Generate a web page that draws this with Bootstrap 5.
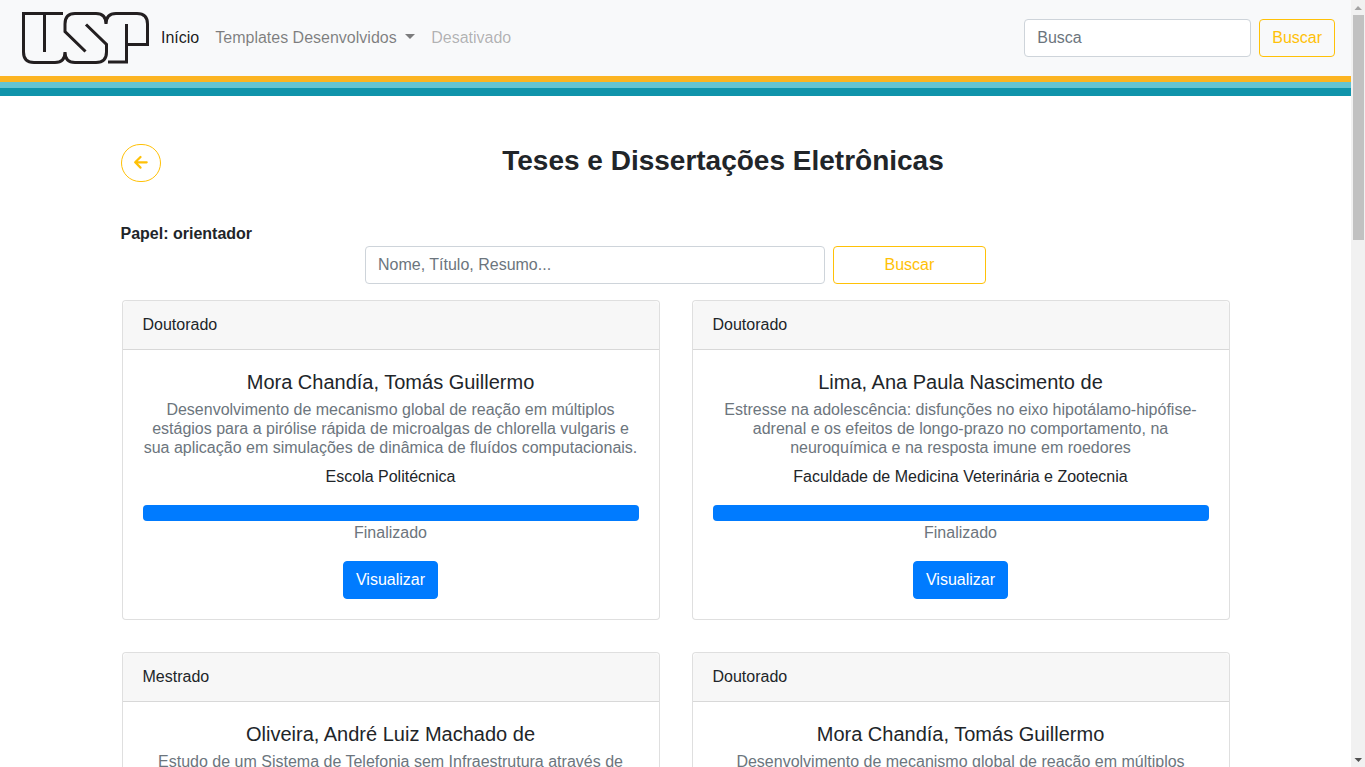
<!DOCTYPE html>
<html lang="pt-br">
<head>
<meta charset="utf-8">
<meta name="viewport" content="width=device-width, initial-scale=1">
<title>Teses e Dissertações Eletrônicas</title>
<link rel="stylesheet" href="https://cdn.jsdelivr.net/npm/bootstrap@5.3.0/dist/css/bootstrap.min.css">
<style>
  body { font-family: "Liberation Sans", Arial, sans-serif; color: #212529; background: #fff; }
  .page-view { min-width: 0; overflow-y: auto; scrollbar-width: none; }
  .page-view::-webkit-scrollbar { display: none; }

  .site-nav { background: #f8f9fa; --bs-navbar-color: rgba(0,0,0,.5); --bs-navbar-active-color: rgba(0,0,0,.9); --bs-navbar-disabled-color: rgba(0,0,0,.3); }
  .site-nav .dropdown-toggle::after { border-width: 5px 5px 0; }
  .usp-logo { fill: none; stroke: #231f20; stroke-width: 3; }
  .stripe-gold { height: 6px; background: #fcb421; }
  .stripe-sky { height: 6px; background: #64c4d2; }
  .stripe-teal { height: 8px; background: #1094ab; }

  .form-control { border-color: #ced4da; border-radius: 4px; }
  .form-control::placeholder { color: #6c757d; }
  .btn { border-radius: 4px; }
  .btn-outline-warning { --bs-btn-color: #ffc107; --bs-btn-border-color: #ffc107; }
  .btn-primary { --bs-btn-bg: #007bff; --bs-btn-border-color: #007bff; }
  .nav-search { width: 227px; }

  .container, .row-wide { --bs-gutter-x: 30px; }
  .btn-back { width: 40px; height: 38px; border-radius: 20px; }
  .page-head { margin-bottom: 40px; }
  .page-title { font-size: 28px; font-weight: 700; }
  .thesis-search { display: grid; grid-template-columns: 3fr 1fr; gap: 8px; max-width: 621px; }

  .thesis-card { border-color: rgba(0,0,0,.125); border-radius: 4px; --bs-card-cap-bg: rgba(0,0,0,.03); --bs-card-border-color: rgba(0,0,0,.125); }
  .thesis-card .card-header { padding: 12px 20px; }
  .thesis-card .card-body { padding: 20px; text-align: center; }
  .thesis-card .card-title { font-size: 20px; font-weight: 400; margin-bottom: 6px; }
  .thesis-card .card-subtitle { font-size: 16px; line-height: 19px; font-weight: 400; margin: 0 0 8px; color: #6c757d; }
  .thesis-card .progress { height: 16px; border-radius: 4px; }
  .thesis-card .progress-bar { background: #007bff; }
  .status-text { color: #6c757d; }

  .scroll-rail { width: 14px; background: #f1f1f1; }
  .scroll-thumb { height: 225px; margin: 0 1px 0 2px; background: #c1c1c1; }
</style>
</head>
<body>
<div class="d-flex vh-100">
  <div class="page-view flex-fill">
    <header>
      <nav class="site-nav navbar navbar-expand-lg px-3 py-2">
        <a class="navbar-brand p-0 m-0" href="#" aria-label="USP">
          <svg class="usp-logo d-block" width="137" height="60" viewBox="16 8 137 60">
            <path d="M63 13.500H23.500V52Q23.500 62.500 34 62.500H55Q65 62.500 65 52Q65 62.500 75 62.500H96Q106.500 62.500 106.500 52V44.500L86 24.500"/>
            <path d="M44.500 13.500V52"/>
            <path d="M85.500 51.500L65 31.500V24Q65 13.500 75 13.500H96Q106 13.500 106 24Q106 13.500 116 13.500H137Q147.500 13.500 147.500 24V44.500H127"/>
            <path d="M126.500 24V62H108"/>
          </svg>
        </a>
        <button class="navbar-toggler" type="button" data-bs-toggle="collapse" data-bs-target="#menu" aria-label="Menu"><span class="navbar-toggler-icon"></span></button>
        <div class="collapse navbar-collapse" id="menu">
          <ul class="navbar-nav me-auto">
            <li class="nav-item"><a class="nav-link active" href="#">Início</a></li>
            <li class="nav-item dropdown"><a class="nav-link dropdown-toggle" href="#" role="button">Templates Desenvolvidos </a></li>
            <li class="nav-item"><a class="nav-link disabled" href="#" aria-disabled="true">Desativado</a></li>
          </ul>
          <form class="d-flex gap-2">
            <input class="form-control nav-search" type="search" placeholder="Busca" aria-label="Busca">
            <button class="btn btn-outline-warning" type="submit">Buscar</button>
          </form>
        </div>
      </nav>
      <div class="stripe-gold"></div>
      <div class="stripe-sky"></div>
      <div class="stripe-teal"></div>
    </header>

    <main class="container mt-5">
      <div class="row row-wide page-head">
        <div class="col-2 col-lg-1">
          <a class="btn btn-outline-warning btn-back d-flex align-items-center justify-content-center p-0" href="#" aria-label="Voltar">
            <svg width="14" height="16" viewBox="0 0 14 16" fill="none" stroke="currentColor" stroke-width="2.2" stroke-linecap="round" stroke-linejoin="round"><path d="M6.500 2L1.200 7.300L6.500 12.600M1.500 7.300H12.700"/></svg>
          </a>
        </div>
        <div class="col-10 col-lg-11"><h1 class="page-title text-center mb-0">Teses e Dissertações Eletrônicas</h1></div>
      </div>

      <div class="fw-bold">Papel: orientador</div>
      <form class="thesis-search mx-auto">
        <input class="form-control" type="text" placeholder="Nome, Título, Resumo..." aria-label="Nome, Título, Resumo">
        <button class="btn btn-outline-warning" type="submit">Buscar</button>
      </form>

      <div class="row row-wide">
        <div class="col-12 col-md-6 p-3">
          <article class="card thesis-card h-100">
            <div class="card-header">Doutorado</div>
            <div class="card-body">
              <h5 class="card-title">Mora Chandía, Tomás Guillermo</h5>
              <h6 class="card-subtitle">Desenvolvimento de mecanismo global de reação em múltiplos estágios para a pirólise rápida de microalgas de chlorella vulgaris e sua aplicação em simulações de dinâmica de fluídos computacionais.</h6>
              <p class="mb-3">Escola Politécnica</p>
              <div class="progress"><div class="progress-bar w-100"></div></div>
              <p class="status-text mb-3">Finalizado</p>
              <a class="btn btn-primary" href="#">Visualizar</a>
            </div>
          </article>
        </div>
        <div class="col-12 col-md-6 p-3">
          <article class="card thesis-card h-100">
            <div class="card-header">Doutorado</div>
            <div class="card-body">
              <h5 class="card-title">Lima, Ana Paula Nascimento de</h5>
              <h6 class="card-subtitle">Estresse na adolescência: disfunções no eixo hipotálamo-hipófise-adrenal e os efeitos de longo-prazo no comportamento, na neuroquímica e na resposta imune em roedores</h6>
              <p class="mb-3">Faculdade de Medicina Veterinária e Zootecnia</p>
              <div class="progress"><div class="progress-bar w-100"></div></div>
              <p class="status-text mb-3">Finalizado</p>
              <a class="btn btn-primary" href="#">Visualizar</a>
            </div>
          </article>
        </div>
        <div class="col-12 col-md-6 p-3">
          <article class="card thesis-card h-100">
            <div class="card-header">Mestrado</div>
            <div class="card-body">
              <h5 class="card-title">Oliveira, André Luiz Machado de</h5>
              <h6 class="card-subtitle">Estudo de um Sistema de Telefonia sem Infraestrutura através de</h6>
            </div>
          </article>
        </div>
        <div class="col-12 col-md-6 p-3">
          <article class="card thesis-card h-100">
            <div class="card-header">Doutorado</div>
            <div class="card-body">
              <h5 class="card-title">Mora Chandía, Tomás Guillermo</h5>
              <h6 class="card-subtitle">Desenvolvimento de mecanismo global de reação em múltiplos</h6>
            </div>
          </article>
        </div>
      </div>
    </main>
  </div>

  <div class="scroll-rail d-flex flex-column flex-shrink-0" aria-hidden="true">
    <svg width="14" height="15" viewBox="0 0 14 15"><path d="M3.500 10L7 6L11 10Z" fill="#a3a3a3"/></svg>
    <div class="scroll-thumb"></div>
    <svg class="mt-auto" width="14" height="15" viewBox="0 0 14 15"><path d="M3.500 6L7.500 10L11 6Z" fill="#505050"/></svg>
  </div>
</div>
<script src="https://cdn.jsdelivr.net/npm/bootstrap@5.3.0/dist/js/bootstrap.bundle.min.js"></script>
</body>
</html>
